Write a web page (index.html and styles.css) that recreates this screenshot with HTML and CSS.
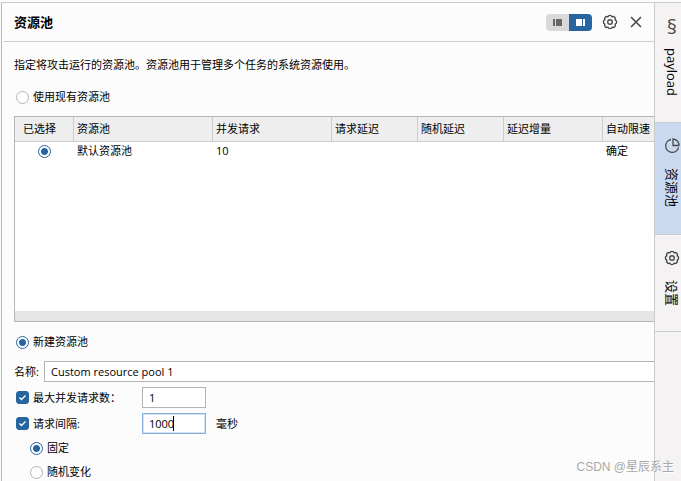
FILE: index.html
```html
<!DOCTYPE html>
<html lang="zh-CN">
<head>
    <meta charset="UTF-8">
    <meta name="viewport" content="width=device-width, initial-scale=1.0">
    <title>资源池</title>
    <link rel="stylesheet" href="styles.css">
</head>
<body>
    <div class="app">
        <main class="panel">
            <header class="panel-header">
                <h1>资源池</h1>
                <div class="layout-toggle">
                    <button type="button" class="toggle-btn" aria-label="左侧">
                        <svg width="9" height="7" viewBox="0 0 9 7"><path d="M0 0h2v7H0zM3 0h6v7H3z" fill="#666"/></svg>
                    </button>
                    <button type="button" class="toggle-btn active" aria-label="右侧">
                        <svg width="9" height="7" viewBox="0 0 9 7"><path d="M0 0h6v7H0zM7 0h2v7H7z" fill="#fff"/></svg>
                    </button>
                </div>
                <button type="button" class="icon-btn gear-btn" aria-label="设置">
                    <svg width="16" height="16" viewBox="0 0 16 16" fill="none" stroke="#4a4a4a" stroke-width="1.4" stroke-linejoin="round"><path d="M13.1 5.9A2.2 2.2 0 0 0 10.1 2.9A2.2 2.2 0 0 0 5.9 2.9A2.2 2.2 0 0 0 2.9 5.9A2.2 2.2 0 0 0 2.9 10.1A2.2 2.2 0 0 0 5.9 13.1A2.2 2.2 0 0 0 10.1 13.1A2.2 2.2 0 0 0 13.1 10.1A2.2 2.2 0 0 0 13.1 5.9Z"/><circle cx="8" cy="8" r="2.3"/></svg>
                </button>
                <button type="button" class="icon-btn" aria-label="关闭">
                    <svg width="12" height="12" viewBox="0 0 12 12" fill="none" stroke="#4a4a4a" stroke-width="1.6"><path d="M1 1l10 10M11 1L1 11"/></svg>
                </button>
            </header>

            <form class="panel-body">
                <p class="intro">指定将攻击运行的资源池。资源池用于管理多个任务的系统资源使用。</p>

                <label class="option"><input type="radio" name="poolMode">使用现有资源池</label>

                <div class="table-box">
                    <table>
                        <colgroup>
                            <col class="col-selected"><col class="col-name"><col class="col-requests"><col class="col-delay"><col class="col-delay"><col class="col-increment"><col class="col-throttle">
                        </colgroup>
                        <thead>
                            <tr>
                                <th>已选择</th>
                                <th>资源池</th>
                                <th>并发请求</th>
                                <th>请求延迟</th>
                                <th>随机延迟</th>
                                <th>延迟增量</th>
                                <th>自动限速</th>
                            </tr>
                        </thead>
                        <tbody>
                            <tr>
                                <td><input type="radio" name="pool" aria-label="默认资源池" checked></td>
                                <td>默认资源池</td>
                                <td>10</td>
                                <td></td>
                                <td></td>
                                <td></td>
                                <td>确定</td>
                            </tr>
                        </tbody>
                    </table>
                    <div class="scrollbar"></div>
                </div>

                <label class="option new-pool"><input type="radio" name="poolMode" checked>新建资源池</label>

                <div class="name-row">
                    <label for="poolName">名称:</label>
                    <input type="text" id="poolName" value="Custom resource pool 1">
                </div>
                <div class="limit-row">
                    <label class="option" for="useMax"><input type="checkbox" id="useMax" checked>最大并发请求数：</label>
                    <input type="text" aria-label="最大并发请求数" value="1">
                </div>
                <div class="limit-row">
                    <label class="option" for="useDelay"><input type="checkbox" id="useDelay" checked>请求间隔:</label>
                    <div class="focus-field">
                        <input type="text" class="focused" aria-label="请求间隔" value="1000">
                        <span class="caret"></span>
                    </div>
                    <span>毫秒</span>
                </div>
                <div class="delay-options">
                    <label class="option"><input type="radio" name="delayType" checked>固定</label>
                    <label class="option"><input type="radio" name="delayType">随机变化</label>
                </div>
            </form>
        </main>

        <nav class="side-tabs">
            <button type="button" class="side-tab">
                <span class="section-sign">§</span>
                <span class="side-label">payload</span>
            </button>
            <button type="button" class="side-tab selected">
                <svg width="16" height="16" viewBox="0 0 16 16" fill="none" stroke="#4a4a4a" stroke-width="1.3"><path d="M7 1.5a6.5 6.5 0 1 0 7.5 8"/><path d="M9 1v6.5h6A6.3 6.3 0 0 0 9 1z"/></svg>
                <span class="side-label">资源池</span>
            </button>
            <button type="button" class="side-tab">
                <svg width="16" height="16" viewBox="0 0 16 16" fill="none" stroke="#4a4a4a" stroke-width="1.4" stroke-linejoin="round"><path d="M13.1 5.9A2.2 2.2 0 0 0 10.1 2.9A2.2 2.2 0 0 0 5.9 2.9A2.2 2.2 0 0 0 2.9 5.9A2.2 2.2 0 0 0 2.9 10.1A2.2 2.2 0 0 0 5.9 13.1A2.2 2.2 0 0 0 10.1 13.1A2.2 2.2 0 0 0 13.1 10.1A2.2 2.2 0 0 0 13.1 5.9Z"/><circle cx="8" cy="8" r="2.3"/></svg>
                <span class="side-label">设置</span>
            </button>
        </nav>
    </div>
    <div class="watermark">CSDN @星辰系主</div>
</body>
</html>
```

FILE: styles.css
```css
* {
    box-sizing: border-box;
}

body {
    margin: 0;
    padding: 2px 0 0 1px;
    height: 100vh;
    overflow: hidden;
    background-color: #fcfcfc;
    color: #000;
    font-family: "Open Sans", "Noto Sans CJK SC", sans-serif;
    font-size: 11px;
    line-height: 20px;
}

button, input {
    margin: 0;
    font: inherit;
    color: inherit;
}

button {
    padding: 0;
    border: none;
    background: none;
    cursor: pointer;
}

svg {
    display: block;
}

.app {
    display: flex;
    height: 100%;
    border-top: 1px solid #c8cecd;
    border-left: 1px solid #b8b8ba;
}

.panel {
    flex: 1;
    min-width: 0;
    overflow: hidden;
}

.panel-header {
    display: flex;
    align-items: center;
    height: 39px;
    margin-left: 2px;
    padding: 0 12px 0 10px;
    border-bottom: 1px solid #cdcdcd;
}

h1 {
    flex: 1;
    margin: 0;
    font-size: 13px;
    font-weight: bold;
}

.layout-toggle {
    display: flex;
    border-radius: 4px;
    overflow: hidden;
}

.toggle-btn {
    display: flex;
    align-items: center;
    justify-content: center;
    width: 23px;
    height: 17px;
    background-color: #d9d9d9;
}

.toggle-btn.active {
    background-color: #26659f;
}

.gear-btn {
    margin: 0 12px 0 10px;
}

.panel-body {
    padding: 13px 0 0 12px;
}

.intro {
    margin: 0 0 12px;
}

.option {
    display: flex;
    align-items: center;
    gap: 4px;
    padding-left: 2px;
}

input[type="radio"],
input[type="checkbox"] {
    appearance: none;
    flex: none;
    width: 13px;
    height: 13px;
    border: 1px solid #b4b4b4;
    background-color: #fff;
}

input[type="radio"] {
    border-radius: 50%;
}

input[type="radio"]:checked {
    border-color: #26659f;
    background-image: radial-gradient(circle, #26659f 3px, transparent 4px);
}

input[type="checkbox"] {
    border-radius: 3px;
}

input[type="checkbox"]:checked {
    border-color: #26659f;
    background: #26659f url("data:image/svg+xml,%3Csvg xmlns='http://www.w3.org/2000/svg' viewBox='0 0 11 11'%3E%3Cpath d='M2.5 5.5l2 2 4-4' fill='none' stroke='white' stroke-width='1.4'/%3E%3C/svg%3E");
}

.table-box {
    display: flex;
    flex-direction: column;
    height: 206px;
    margin-top: 9px;
    border: 1px solid #b9b5b6;
    border-right: none;
    background-color: #fff;
    overflow: hidden;
}

table {
    flex: none;
    width: 100%;
    table-layout: fixed;
    border-collapse: separate;
    border-spacing: 0;
}

.col-selected { width: 59px; }
.col-name { width: 139px; }
.col-requests { width: 119px; }
.col-delay { width: 86px; }
.col-increment { width: 99px; }

th, td {
    padding: 0 0 0 3px;
    font-weight: normal;
    text-align: left;
    white-space: nowrap;
}

th {
    height: 25px;
    background-color: #eee;
    border-right: 1px solid #cdcdcd;
    border-bottom: 1px solid #cdcdcd;
}

th:first-child {
    padding: 0 9px 0 0;
    text-align: center;
}

th:last-child {
    border-right: none;
}

td {
    line-height: 18px;
}

td:first-child {
    padding: 0;
    text-align: center;
}

td input {
    display: block;
    margin: 0 auto;
}

.scrollbar {
    height: 10px;
    margin-top: auto;
    background-color: #e5e5e5;
}

.new-pool {
    margin-top: 10px;
}

input[type="text"] {
    height: 21px;
    padding: 0 6px;
    border: 1px solid #b4b4b4;
    border-radius: 0;
    background-color: #fff;
    outline: none;
}

.name-row {
    display: grid;
    grid-template-columns: 30px 1fr;
    align-items: center;
    margin-top: 9px;
}

.name-row input {
    min-width: 0;
    border-right: none;
}

.limit-row {
    display: grid;
    grid-template-columns: 128px 64px auto;
    align-items: center;
    margin-top: 5px;
}

.limit-row > span {
    padding-left: 10px;
}

.limit-row input[type="text"] {
    width: 64px;
}

.focus-field {
    position: relative;
    display: flex;
}

input[type="text"].focused {
    border-color: #87afda;
    box-shadow: inset 0 0 0 1px #d3e4f8;
}

.caret {
    position: absolute;
    left: 31px;
    top: 3px;
    width: 1px;
    height: 15px;
    background-color: #000;
}

.delay-options {
    display: grid;
    gap: 4px;
    margin-top: 4px;
    padding-left: 14px;
}

.side-tabs {
    flex: none;
    width: 27px;
    border-left: 1px solid #c8cecd;
    background-color: #f4f2f3;
    overflow: hidden;
}

.side-tab {
    display: flex;
    flex-direction: column;
    align-items: center;
    gap: 14px;
    width: 34px;
    height: 112px;
    padding-top: 15px;
    border-bottom: 1px solid #c8cecd;
}

.side-tab:first-child {
    height: 120px;
    gap: 12px;
}

.side-tab:last-child {
    height: 97px;
}

.side-tab.selected {
    background-color: #c9d9f0;
}

.section-sign {
    font-size: 20px;
    line-height: 18px;
    color: #4a4a4a;
}

.side-label {
    writing-mode: vertical-rl;
    text-orientation: sideways;
    font-size: 13px;
    line-height: 16px;
}

.watermark {
    position: absolute;
    right: 7px;
    bottom: 4px;
    font-family: "Liberation Sans", "Noto Sans CJK SC", sans-serif;
    font-size: 12px;
    color: #a8a8a8;
    text-shadow: 1px 1px 0 #fff;
}
```
